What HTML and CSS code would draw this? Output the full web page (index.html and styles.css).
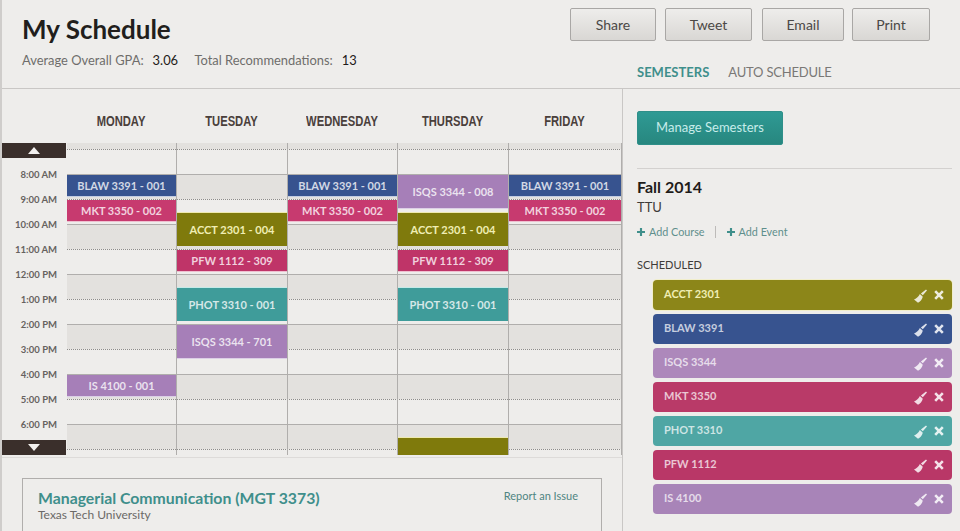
FILE: index.html
```html
<!DOCTYPE html>
<html lang="en">
<head>
    <meta charset="UTF-8">
    <meta name="viewport" content="width=device-width, initial-scale=1.0">
    <title>My Schedule</title>
    <link rel="stylesheet" href="styles.css">
</head>
<body>
    <!-- icons used in the scheduled list -->
    <svg class="icon-defs" aria-hidden="true">
        <symbol id="brush" viewBox="0 0 14 14">
            <path d="M13 .5 14 1.500 9.800 6.300 7.900 4.500zM6.900 5 9.800 7.800C9 10.500 7.200 12.800 5 13.800L1 10.500C3 9.800 5.500 7.800 6.900 5z"/>
        </symbol>
        <symbol id="cross" viewBox="0 0 10 10">
            <path d="M1.200 1.200 8.800 8.800M8.800 1.200 1.200 8.800"/>
        </symbol>
        <symbol id="plus" viewBox="0 0 9 9">
            <path d="M3.300 0h2.400v3.300H9v2.400H5.700V9H3.300V5.700H0V3.300h3.300z"/>
        </symbol>
    </svg>

    <div class="page">
        <header class="top">
            <div class="summary">
                <h1>My Schedule</h1>
                <p class="stats">
                    <span>Average Overall GPA:</span><b>3.06</b>
                    <span class="stats-gap">Total Recommendations:</span><b>13</b>
                </p>
            </div>
            <div class="top-right">
                <div class="share-btns">
                    <button type="button" class="btn btn-share">Share</button>
                    <button type="button" class="btn btn-tweet">Tweet</button>
                    <button type="button" class="btn btn-email">Email</button>
                    <button type="button" class="btn btn-print">Print</button>
                </div>
                <nav class="tabs">
                    <a class="tab active">SEMESTERS</a>
                    <a class="tab">AUTO SCHEDULE</a>
                </nav>
            </div>
        </header>

        <div class="content">
            <main class="left">
                <div class="day-heads">
                    <div class="day-head">MONDAY</div>
                    <div class="day-head">TUESDAY</div>
                    <div class="day-head">WEDNESDAY</div>
                    <div class="day-head">THURSDAY</div>
                    <div class="day-head">FRIDAY</div>
                </div>

                <div class="calendar">
                    <div class="times">
                        <div class="scroll-btn"><span class="arrow-up"></span></div>
                        <div class="time-list">
                            <div class="time">8:00 AM</div>
                            <div class="time">9:00 AM</div>
                            <div class="time">10:00 AM</div>
                            <div class="time">11:00 AM</div>
                            <div class="time">12:00 PM</div>
                            <div class="time">1:00 PM</div>
                            <div class="time">2:00 PM</div>
                            <div class="time">3:00 PM</div>
                            <div class="time">4:00 PM</div>
                            <div class="time">5:00 PM</div>
                            <div class="time">6:00 PM</div>
                        </div>
                        <div class="scroll-btn"><span class="arrow-down"></span></div>
                    </div>

                    <div class="board">
                        <div class="slot shade edge"></div>
                        <div class="slot"></div>
                        <div class="slot shade"></div>
                        <div class="slot"></div>
                        <div class="slot shade"></div>
                        <div class="slot"></div>
                        <div class="slot shade"></div>
                        <div class="slot"></div>
                        <div class="slot shade"></div>
                        <div class="slot"></div>
                        <div class="slot shade"></div>
                        <div class="slot"></div>
                        <div class="slot shade"></div>
                        <div class="slot edge-end"></div>

                        <!-- event top and height are px from the top of the board -->
                        <div class="days">
                            <div class="day">
                                <div class="event blaw" style="top:32px;height:21px">BLAW 3391 - 001</div>
                                <div class="event mkt" style="top:57px;height:21px">MKT 3350 - 002</div>
                                <div class="event is" style="top:232px;height:21px">IS 4100 - 001</div>
                            </div>
                            <div class="day">
                                <div class="event acct" style="top:70px;height:33px">ACCT 2301 - 004</div>
                                <div class="event pfw" style="top:107px;height:21px">PFW 1112 - 309</div>
                                <div class="event phot" style="top:145px;height:33px">PHOT 3310 - 001</div>
                                <div class="event isqs" style="top:182px;height:33px">ISQS 3344 - 701</div>
                            </div>
                            <div class="day">
                                <div class="event blaw" style="top:32px;height:21px">BLAW 3391 - 001</div>
                                <div class="event mkt" style="top:57px;height:21px">MKT 3350 - 002</div>
                            </div>
                            <div class="day">
                                <div class="event isqs" style="top:32px;height:33px">ISQS 3344 - 008</div>
                                <div class="event acct" style="top:70px;height:33px">ACCT 2301 - 004</div>
                                <div class="event pfw" style="top:107px;height:21px">PFW 1112 - 309</div>
                                <div class="event phot" style="top:145px;height:33px">PHOT 3310 - 001</div>
                                <div class="event acct" style="top:295px;height:17px"></div>
                            </div>
                            <div class="day">
                                <div class="event blaw" style="top:32px;height:21px">BLAW 3391 - 001</div>
                                <div class="event mkt" style="top:57px;height:21px">MKT 3350 - 002</div>
                            </div>
                        </div>
                    </div>
                </div>

                <div class="calendar-end"></div>

                <section class="course-card">
                    <div class="course-head">
                        <div>
                            <h2>Managerial Communication (MGT 3373)</h2>
                            <p>Texas Tech University</p>
                        </div>
                        <a class="report">Report an Issue</a>
                    </div>
                </section>
            </main>

            <aside class="side">
                <button type="button" class="manage-btn">Manage Semesters</button>
                <div class="side-rule"></div>
                <h3>Fall 2014</h3>
                <p class="school">TTU</p>
                <div class="add-links">
                    <a class="add"><svg class="ico-plus"><use href="#plus"/></svg>Add Course</a>
                    <span class="add-sep"></span>
                    <a class="add"><svg class="ico-plus"><use href="#plus"/></svg>Add Event</a>
                </div>
                <h4>SCHEDULED</h4>
                <ul class="course-list">
                    <li class="course acct"><span>ACCT 2301</span>
                        <svg class="ico-brush"><use href="#brush"/></svg>
                        <svg class="ico-x"><use href="#cross"/></svg>
                    </li>
                    <li class="course blaw"><span>BLAW 3391</span>
                        <svg class="ico-brush"><use href="#brush"/></svg>
                        <svg class="ico-x"><use href="#cross"/></svg>
                    </li>
                    <li class="course isqs"><span>ISQS 3344</span>
                        <svg class="ico-brush"><use href="#brush"/></svg>
                        <svg class="ico-x"><use href="#cross"/></svg>
                    </li>
                    <li class="course mkt"><span>MKT 3350</span>
                        <svg class="ico-brush"><use href="#brush"/></svg>
                        <svg class="ico-x"><use href="#cross"/></svg>
                    </li>
                    <li class="course phot"><span>PHOT 3310</span>
                        <svg class="ico-brush"><use href="#brush"/></svg>
                        <svg class="ico-x"><use href="#cross"/></svg>
                    </li>
                    <li class="course pfw"><span>PFW 1112</span>
                        <svg class="ico-brush"><use href="#brush"/></svg>
                        <svg class="ico-x"><use href="#cross"/></svg>
                    </li>
                    <li class="course is"><span>IS 4100</span>
                        <svg class="ico-brush"><use href="#brush"/></svg>
                        <svg class="ico-x"><use href="#cross"/></svg>
                    </li>
                </ul>
            </aside>
        </div>
    </div>
</body>
</html>
```

FILE: styles.css
```css
:root {
    --bg: #eeedeb;
    --band: #e3e1de;
    --line: #b0aeac;
    --rule: #c9c7c5;
    --dark: #3a2f2b;
    --text: #1f1c1a;
    --muted: #6f6d6b;
    --teal: #3f8f8b;
    --day-cols: 110px 111px 110px 111px 113px;
}

* {
    margin: 0;
    padding: 0;
    box-sizing: border-box;
}

html, body {
    height: 100%;
    overflow: hidden;
}

body {
    font-family: Lato, "Open Sans", Arial, sans-serif;
    color: var(--text);
    background: var(--bg);
}

.icon-defs {
    display: none;
}

.page {
    height: 531px;
    overflow: hidden;
    border-left: 2px solid #cfcdcb;
}

/* header */
.top {
    height: 89px;
    display: flex;
    justify-content: space-between;
    border-bottom: 1px solid var(--rule);
}

.summary {
    padding: 14px 0 0 20px;
}

h1 {
    font-size: 26px;
    line-height: 30px;
    font-weight: 700;
    color: #211e1c;
}

.stats {
    margin-top: 8px;
    font-size: 12.900px;
    line-height: 16px;
    color: var(--muted);
}

.stats b {
    font-weight: 400;
    color: var(--text);
    margin-left: 9px;
}

.stats-gap {
    margin-left: 13px;
}

.top-right {
    width: 360px;
    flex: none;
    padding-top: 8px;
    margin-right: 30px;
}

.share-btns {
    display: flex;
    gap: 9px;
}

.btn {
    flex: none;
    height: 33px;
    font-family: inherit;
    font-size: 14px;
    color: #4b4846;
    background: linear-gradient(#eeedeb, #d9d7d4);
    border: 1px solid #a9a7a5;
    border-radius: 2px;
}

.btn-share { width: 86px; }
.btn-tweet { width: 87px; }
.btn-email { width: 82px; margin: 0 -1px 0 1px; }
.btn-print { width: 78px; }

.tabs {
    display: flex;
    gap: 19px;
    margin: 23px 0 0 67px;
    font-size: 13px;
    line-height: 16px;
    letter-spacing: -0.2px;
    color: #7a7876;
}

.tab.active {
    font-weight: 700;
    letter-spacing: 0;
    color: var(--teal);
}

/* main area */
.content {
    display: flex;
    height: 442px;
}

.left {
    width: 620px;
    flex: none;
}

.day-heads {
    height: 54px;
    padding-left: 64px;
    display: grid;
    grid-template-columns: var(--day-cols);
}

.day-head {
    padding-top: 24px;
    text-align: center;
    font-family: "Liberation Sans", sans-serif;
    font-size: 14px;
    line-height: 17px;
    font-weight: 700;
    color: #4a403b;
    transform: scaleX(0.8);
}

.calendar {
    display: flex;
    height: 312px;
}

.times {
    width: 64px;
    flex: none;
    display: flex;
    flex-direction: column;
    justify-content: space-between;
}

.scroll-btn {
    height: 15px;
    background: var(--dark);
    display: flex;
    align-items: center;
    justify-content: center;
}

.arrow-up, .arrow-down {
    width: 0;
    height: 0;
    border-left: 6px solid transparent;
    border-right: 6px solid transparent;
}

.arrow-up { border-bottom: 7px solid #f2f0ee; }
.arrow-down { border-top: 7px solid #f2f0ee; }

.time {
    height: 25px;
    padding-right: 9px;
    text-align: right;
    font-size: 9.500px;
    line-height: 25px;
    font-weight: 700;
    color: #66625f;
}

.board {
    flex: 1;
    position: relative;
    margin-left: 1px;
}

.slot {
    height: 25px;
    border-top: 1px dotted #8e8c8a;
}

.slot.shade {
    background: var(--band);
    border-top: 1px solid var(--line);
}

.slot.edge {
    height: 6px;
    border-top: none;
}

.slot.edge-end {
    height: 6px;
}

.days {
    position: absolute;
    inset: 0;
    display: grid;
    grid-template-columns: var(--day-cols);
}

.day {
    position: relative;
    border-right: 1px solid var(--line);
}

.event {
    position: absolute;
    left: 0;
    right: 0;
    display: flex;
    align-items: center;
    justify-content: center;
    font-size: 11px;
    font-weight: 700;
    color: rgba(255, 255, 255, 0.78);
}

.event.blaw { background: #37538f; box-shadow: 0 1px 0 #c3cde2; }
.event.mkt { background: #c73a6f; box-shadow: 0 1px 0 #eec0d0; }
.event.pfw { background: #bf3468; box-shadow: 0 1px 0 #eec0d0; }
.event.acct { background: #7f7a0c; color: #f0eeb4; box-shadow: 0 -1px 0 #eeeab0; }
.event.phot { background: #3f9c9a; box-shadow: 0 -1px 0 #c5eae8; }
.event.isqs, .event.is { background: #a67fb8; box-shadow: 0 1px 0 #dccfe6; }

.calendar-end {
    height: 3px;
    border-bottom: 1px solid #dddbd9;
}

/* course card */
.course-card {
    height: 120px;
    margin: 20px 20px 0 20px;
    padding: 9px 23px 0 15px;
    border: 1px solid var(--line);
}

.course-head {
    display: flex;
    justify-content: space-between;
}

h2 {
    font-size: 15.800px;
    line-height: 20px;
    font-weight: 700;
    color: var(--teal);
}

.course-head p {
    font-size: 12px;
    line-height: 14px;
    color: #6b6967;
}

.report {
    padding-top: 1px;
    font-size: 11px;
    line-height: 14px;
    color: #4f8582;
}

/* sidebar */
.side {
    flex: 1;
    padding: 22px 8px 0 14px;
    border-left: 1px solid var(--rule);
}

.manage-btn {
    display: block;
    width: 146px;
    height: 34px;
    padding-bottom: 2px;
    font-family: inherit;
    font-size: 13px;
    color: #c7ecea;
    background: linear-gradient(#2f9a94, #27877f);
    border: 1px solid #2f8f89;
    border-radius: 2px;
}

.side-rule {
    margin-top: 23px;
    border-top: 1px solid #d3d1cf;
}

h3 {
    margin-top: 8px;
    font-size: 16px;
    line-height: 20px;
    font-weight: 700;
}

.school {
    margin-top: 2px;
    font-size: 13px;
    line-height: 16px;
    color: #3e3b39;
}

.add-links {
    margin-top: 9px;
    display: flex;
    align-items: center;
    font-size: 10.800px;
    line-height: 16px;
    color: #5f8f8c;
}

.add {
    display: flex;
    align-items: center;
    gap: 4px;
}

.ico-plus {
    width: 8px;
    height: 8px;
    fill: var(--teal);
}

.add-sep {
    height: 12px;
    margin: 0 11px 0 10px;
    border-left: 1px solid #bdbbb9;
}

h4 {
    margin-top: 18px;
    font-size: 11px;
    line-height: 14px;
    font-weight: 400;
    color: #3e3b39;
}

.course-list {
    list-style: none;
    margin: 8px 0 0 16px;
    display: flex;
    flex-direction: column;
    gap: 4px;
}

.course {
    height: 30px;
    padding: 0 8px 0 11px;
    display: flex;
    align-items: center;
    border-radius: 4px;
    font-size: 11px;
    font-weight: 700;
    color: rgba(255, 255, 255, 0.72);
}

.course span {
    flex: 1;
    margin-bottom: 3px;
}

.course.acct { background: #8c8619; color: #f0eeb4; box-shadow: 0 0 0 1px #f1eecb; }
.course.blaw { background: #37538f; }
.course.isqs { background: #ad88bb; }
.course.mkt { background: #b93a68; }
.course.phot { background: #4fa6a4; }
.course.pfw { background: #b93767; }
.course.is { background: #a884b8; }

.ico-brush {
    width: 14px;
    height: 14px;
    margin: 2px 7px 0 0;
    fill: rgba(255, 255, 255, 0.82);
}

.ico-x {
    width: 10px;
    height: 10px;
    fill: none;
    stroke: rgba(255, 255, 255, 0.85);
    stroke-width: 2.600;
}
```
